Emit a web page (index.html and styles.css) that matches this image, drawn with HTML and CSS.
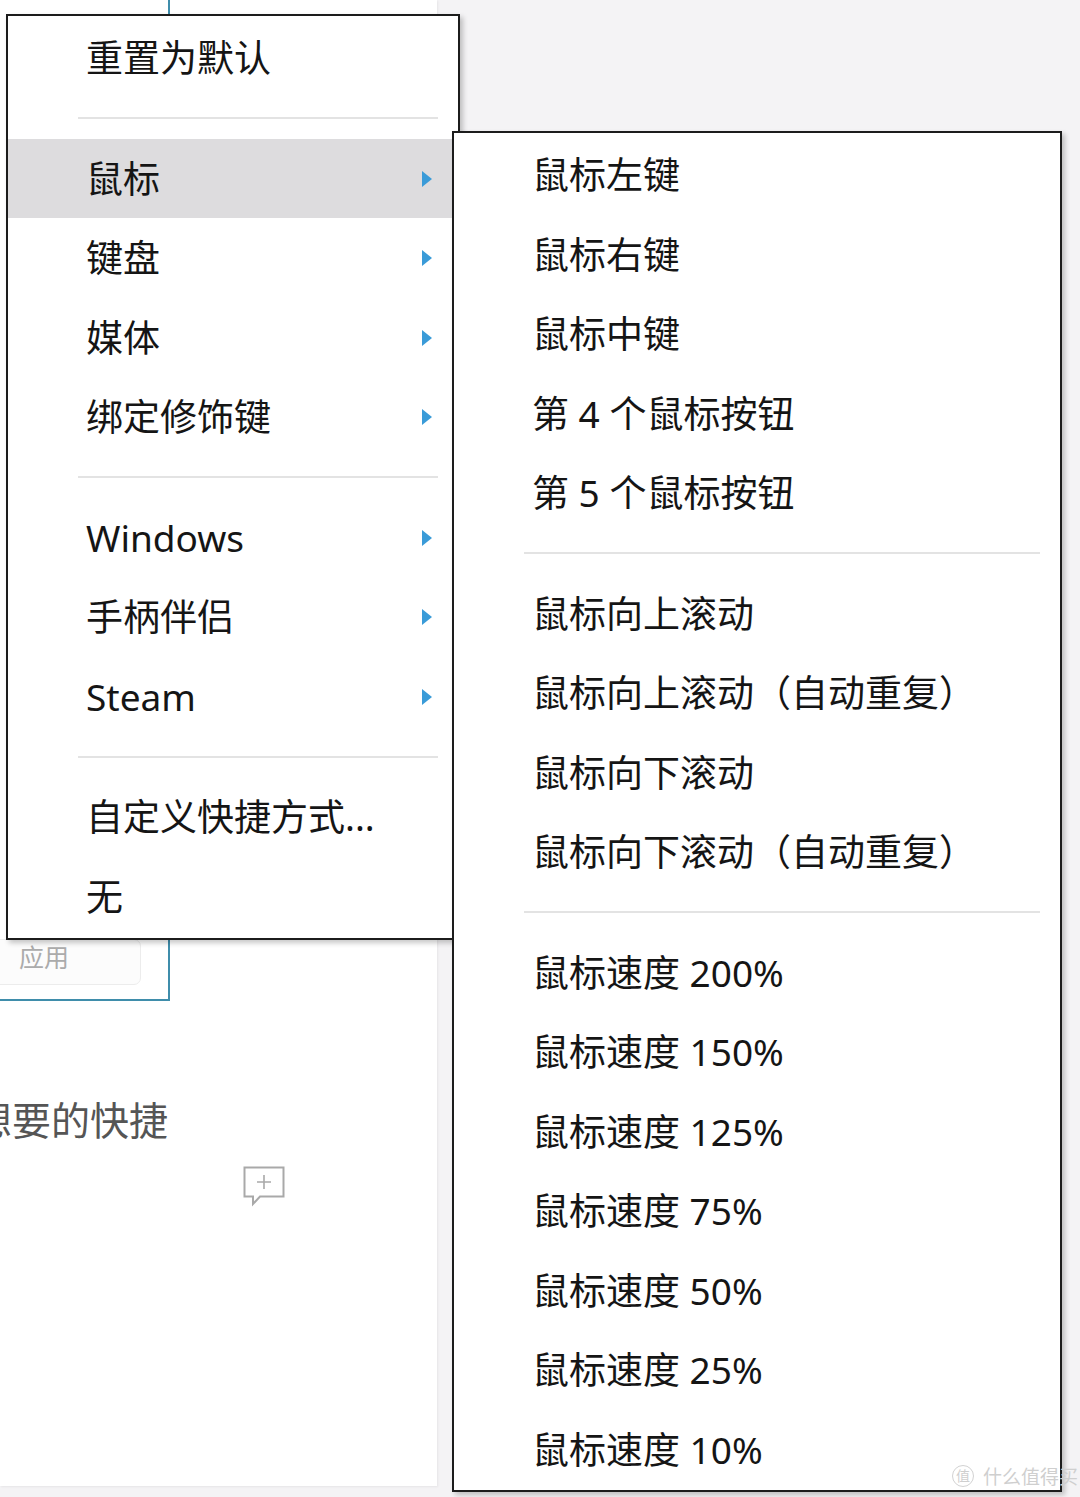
FILE: index.html
```html
<!DOCTYPE html>
<html lang="zh-CN">
<head>
    <meta charset="UTF-8">
    <meta name="viewport" content="width=device-width, initial-scale=1.0">
    <title>快捷方式设置</title>
    <link rel="stylesheet" href="styles.css">
</head>
<body>
    <!-- Settings panel underneath the menus -->
    <div class="panel">
        <div class="binding-box">
            <div class="apply-btn">应用</div>
        </div>
        <p class="hint">想要的快捷</p>
        <div class="add-comment">
            <svg width="42" height="42" viewBox="0 0 42 42">
                <path d="M1.5 1.5 H40.5 V30.5 H17 L10 38 V30.5 H1.5 Z" fill="none" stroke="#a9a9a9" stroke-width="2"/>
                <path d="M21 9 V23 M14 16 H28" stroke="#a9a9a9" stroke-width="1.6"/>
            </svg>
        </div>
    </div>

    <!-- Main context menu -->
    <ul class="menu menu-main">
        <li class="menu-item">重置为默认</li>
        <li class="separator"></li>
        <li class="menu-item has-sub active">鼠标</li>
        <li class="menu-item has-sub">键盘</li>
        <li class="menu-item has-sub">媒体</li>
        <li class="menu-item has-sub">绑定修饰键</li>
        <li class="separator"></li>
        <li class="menu-item has-sub">Windows</li>
        <li class="menu-item has-sub">手柄伴侣</li>
        <li class="menu-item has-sub">Steam</li>
        <li class="separator"></li>
        <li class="menu-item">自定义快捷方式...</li>
        <li class="menu-item">无</li>
    </ul>

    <!-- Mouse submenu -->
    <ul class="menu menu-sub">
        <li class="menu-item">鼠标左键</li>
        <li class="menu-item">鼠标右键</li>
        <li class="menu-item">鼠标中键</li>
        <li class="menu-item">第 4 个鼠标按钮</li>
        <li class="menu-item">第 5 个鼠标按钮</li>
        <li class="separator"></li>
        <li class="menu-item">鼠标向上滚动</li>
        <li class="menu-item">鼠标向上滚动（自动重复）</li>
        <li class="menu-item">鼠标向下滚动</li>
        <li class="menu-item">鼠标向下滚动（自动重复）</li>
        <li class="separator"></li>
        <li class="menu-item">鼠标速度 200%</li>
        <li class="menu-item">鼠标速度 150%</li>
        <li class="menu-item">鼠标速度 125%</li>
        <li class="menu-item">鼠标速度 75%</li>
        <li class="menu-item">鼠标速度 50%</li>
        <li class="menu-item">鼠标速度 25%</li>
        <li class="menu-item">鼠标速度 10%</li>
    </ul>

    <div class="watermark"><span class="wm-logo">值</span>什么值得买</div>
</body>
</html>
```

FILE: styles.css
```css
* {
    margin: 0;
    padding: 0;
    box-sizing: border-box;
}

body {
    font-family: "Noto Sans", "Noto Sans CJK SC", sans-serif;
    background-color: #f4f3f5;
    color: #151515;
    width: 1080px;
    height: 1497px;
    overflow: hidden;
    position: relative;
}

/* Background panel */
.panel {
    width: 437px;
    height: 1486px;
    background: #fff;
    box-shadow: 1px 1px 2px rgba(0, 0, 0, 0.06);
    overflow: hidden;
}

.binding-box {
    width: 180px;
    height: 1001px;
    margin-left: -10px;
    border-right: 2px solid #3f8dab;
    border-bottom: 2px solid #3f8dab;
    display: flex;
    align-items: flex-end;
    padding-bottom: 14px;
}

.apply-btn {
    width: 161px;
    height: 46px;
    margin-left: -10px;
    padding-left: 38px;
    border: 1px solid #ececec;
    border-radius: 7px;
    background: #fcfcfc;
    color: #ababab;
    font-size: 25px;
    line-height: 34px;
}

.hint {
    margin-top: 95px;
    margin-left: -27px;
    font-size: 39px;
    line-height: 48px;
    color: #555;
}

.add-comment {
    margin: 22px 0 0 243px;
    width: 42px;
    height: 42px;
}

/* Context menus */
.menu {
    position: absolute;
    list-style: none;
    background: #fff;
    border: 2px solid #1c1c1c;
    padding: 2px 0;
    box-shadow: 3px 3px 5px rgba(0, 0, 0, 0.22);
    font-size: 37px;
}

.menu-main {
    left: 6px;
    top: 14px;
    width: 454px;
}

.menu-sub {
    left: 452px;
    top: 131px;
    width: 610px;
    height: 1361px;
}

.menu-item {
    height: 79.5px;
    line-height: 79.5px;
    padding-left: 78px;
    position: relative;
    white-space: nowrap;
}

.menu-sub .menu-item {
    padding-left: 78px;
}

.menu-item.active {
    background: #dddcde;
}

.has-sub::after {
    content: "";
    position: absolute;
    right: 26px;
    top: 32px;
    border-left: 10px solid #3a9bd8;
    border-top: 8px solid transparent;
    border-bottom: 8px solid transparent;
}

.separator {
    height: 2px;
    margin: 19.5px 20px 19.5px 70px;
    background: #e3e3e3;
}

.watermark {
    position: absolute;
    left: 952px;
    top: 1462px;
    display: flex;
    align-items: center;
    gap: 9px;
    font-size: 19px;
    color: #cfcfcf;
}

.wm-logo {
    width: 22px;
    height: 22px;
    border: 1.5px solid #d2d2d2;
    border-radius: 50%;
    font-size: 14px;
    line-height: 19px;
    text-align: center;
}
```
